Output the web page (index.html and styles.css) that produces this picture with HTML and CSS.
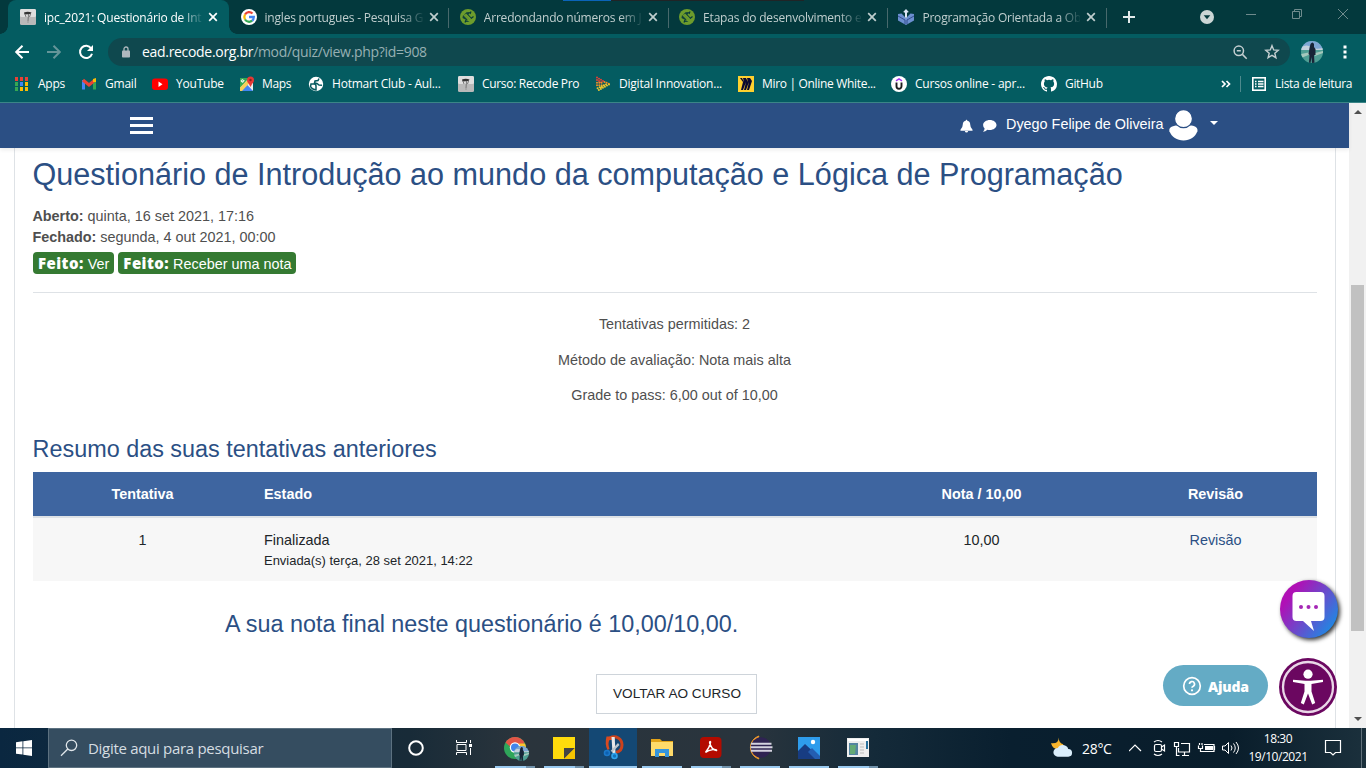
FILE: index.html
```html
<!DOCTYPE html>
<html lang="pt-br">
<head>
<meta charset="utf-8">
<title>ipc_2021: Questionário de Introdução</title>
<link rel="stylesheet" href="styles.css">
</head>
<body>
<svg class="defs" width="0" height="0" aria-hidden="true">
  <symbol id="close" viewBox="0 0 10 10"><path d="M1.2 1.2L8.8 8.8M8.8 1.2L1.2 8.8" stroke="currentColor" stroke-width="1.7" fill="none"/></symbol>
  <symbol id="recode" viewBox="0 0 16 16"><rect width="16" height="16" rx="1.5" fill="#b9b9b9"/><rect width="16" height="8" rx="1.5" fill="#dedede"/><path d="M4 3.5Q8 1.8 11.5 3.6L10.5 5L4.5 5.500Z" fill="#333"/><path d="M8.5 5L8 12M5 5L6 8M10.5 5L9.5 8M8 12.5v1" stroke="#777" fill="none"/></symbol>
  <symbol id="devmedia" viewBox="0 0 16 16"><circle cx="8" cy="8" r="8" fill="#6d9c2c"/><path d="M6.500 3.200L10.500 3 8.500 5.500 11.800 9 9.800 11 4.300 5.500zM9.500 12.800L5.500 13 7.500 10.500 3 6 2.500 9z" fill="#05393c" opacity=".9"/><path d="M4.500 6L6 4.500 11.500 10 10 11.500z" fill="#6d9c2c"/><path d="M11 2.500l-1 2.500M13.500 7.500l-2.500 2M5 13.500l1-2.500" stroke="#05393c" stroke-width="1.200"/></symbol>
  <symbol id="photo" viewBox="0 0 22 22"><clipPath id="pc"><circle cx="11" cy="11" r="11"/></clipPath><g clip-path="url(#pc)"><rect width="22" height="22" fill="#4f9e94"/><rect width="22" height="8" fill="#7da6d4"/><path d="M0 6Q6 3 10 6T22 7V9H0z" fill="#c3d1dd"/><path d="M0 13L10 11v2L0 17zM14 12l8-2v2l-8 3z" fill="#a5c8bd"/><path d="M9.500 3q2-3 3.500 0v3l1.500 2v6h-1.500l.5 8h-2.500l-.5-6-1 6H8l.5-8-1-1 1-6z" fill="#172437"/></g></symbol>
</svg>
<div class="browser">
  <div class="tabstrip">
    <i class="edge blue"></i><i class="edge dark"></i>
    <div class="tab active"><svg class="fav"><use href="#recode"/></svg><span class="ttl">ipc_2021: Questionário de Int</span><svg class="x"><use href="#close"/></svg></div>
    <div class="tab sep"><svg class="fav" viewBox="0 0 16 16"><circle cx="8" cy="8" r="8" fill="#fff"/><g fill="none" stroke-width="2.300"><path d="M4 5.500A4.900 4.900 0 0 1 11.500 4.500" stroke="#ea4335"/><path d="M4 5.500A5 5 0 0 0 4 10.500" stroke="#fbbc05"/><path d="M4 10.500A4.900 4.900 0 0 0 11.200 11.700" stroke="#34a853"/><path d="M8 8h4.800Q12.700 10.600 11.200 11.700" stroke="#4285f4"/></g></svg><span class="ttl">ingles portugues - Pesquisa G</span><svg class="x"><use href="#close"/></svg></div>
    <div class="tab sep"><svg class="fav"><use href="#devmedia"/></svg><span class="ttl">Arredondando números em Ja</span><svg class="x"><use href="#close"/></svg></div>
    <div class="tab sep"><svg class="fav"><use href="#devmedia"/></svg><span class="ttl">Etapas do desenvolvimento e</span><svg class="x"><use href="#close"/></svg></div>
    <div class="tab sep"><svg class="fav" viewBox="0 0 16 16"><path d="M0 5l3.500-.5L8 9l4.500-4.500L16 5v6.500L8 16l-8-4.500z" fill="#6b8fd0"/><path d="M0 7l7 4v4M16 7l-7 4v4" stroke="#344f91" fill="none"/><path d="M8 0l2.800 3-1.800.7V8L8 9.500 7 8V3.700L5.200 3z" fill="#dce6f5"/></svg><span class="ttl">Programação Orientada a Obj</span><svg class="x"><use href="#close"/></svg></div>
    <svg class="plus" viewBox="0 0 12 12"><path d="M6 0v12M0 6h12" stroke="#e2eaea" stroke-width="2"/></svg>
    <svg class="caps" viewBox="0 0 170 34"><circle cx="17" cy="17" r="7" fill="#ccd6d6"/><path d="M13.700 15.200h6.600L17 19.300z" fill="#053a3e"/><g fill="none" stroke="#6f8b8d"><path d="M56 14.500h10"/><path d="M102.500 11.500h7v7h-7zM104.500 11.500v-2h7v7h-2"/><path d="M148 9l10 10M158 9l-10 10"/></g></svg>
  </div>
  <div class="toolbar">
    <svg class="nav" viewBox="0 0 100 30"><g fill="none" stroke="#fff" stroke-width="2"><path d="M29 15H16.500M22.500 8.700L16.200 15l6.300 6.300"/><path d="M47 15h13M53.500 8.700L59.800 15l-6.300 6.300" stroke="#659599"/><path d="M91.200 11.500A6.100 6.100 0 1 0 92 16.700"/></g><path d="M93 8v6h-6z" fill="#fff"/></svg>
    <div class="address"><svg class="lock" viewBox="0 0 8 12"><path d="M2 5V3a2 2 0 0 1 4 0v2" fill="none" stroke="#aeb8be" stroke-width="1.300"/><rect y="4.500" width="8" height="7" rx=".8" fill="#aeb8be"/></svg><span class="url"><b>ead.recode.org.br</b>/mod/quiz/view.php?id=908</span>
    <svg class="addricons" viewBox="0 0 60 28"><g fill="none" stroke="#c5cfd1" stroke-width="1.500"><circle cx="14.800" cy="12.800" r="4.700"/><path d="M18.400 16.400l4.300 4.300M12.800 12.800h4"/><path d="M48 7.700l1.700 4.200 4.500.4-3.400 2.900 1.100 4.500L48 17.300l-3.900 2.400 1.100-4.500-3.400-2.900 4.500-.4z" stroke-width="1.400"/></g></svg></div>
    <svg class="photo"><use href="#photo"/></svg>
    <svg class="dots" viewBox="0 0 4 14"><path d="M.5.5h3v3h-3zM.5 5.500h3v3h-3zM.5 10.500h3v3h-3z" fill="#fff"/></svg>
  </div>
  <div class="bookmarks">
    <div><svg viewBox="0 0 16 16"><path d="M1 1h3v4H1zM6 1h3v4H6zM11 1h3v4h-3z" fill="#e84236"/><path d="M1 6h3v4H1z" fill="#36a853"/><path d="M6 6h3v4H6z" fill="#4285f4"/><path d="M11 6h3v4h-3z" fill="#fbbc05"/><path d="M1 11h3v4H1z" fill="#36a853"/><path d="M6 11h3v4H6zM11 11h3v4h-3z" fill="#fbbc05"/></svg><span>Apps</span></div>
    <div><svg viewBox="0 0 16 16"><path d="M2.500 13.500V4" stroke="#4285f4" stroke-width="3"/><path d="M13.500 13.500V4" stroke="#34a853" stroke-width="3"/><path d="M2 4l6 5 6-5" stroke="#ea4335" stroke-width="3" fill="none"/><path d="M12 6V3l3-1v4z" fill="#fbbc05"/></svg><span>Gmail</span></div>
    <div><svg viewBox="0 0 16 16"><rect y="2.500" width="16" height="11.500" rx="3" fill="#f00"/><path d="M6.500 5.500l4 2.700-4 2.700z" fill="#fff"/></svg><span>YouTube</span></div>
    <div><svg viewBox="0 0 16 16"><rect x="2" y="2" width="13" height="13" rx="1" fill="#eee"/><path d="M2 2h9L2 12z" fill="#34a853"/><path d="M3 15l6-6.500L15 15z" fill="#4285f4"/><path d="M2 11.500L10.500 3l2 3L4 15H2z" fill="#f6cf58"/><circle cx="12.500" cy="4" r="3.500" fill="#e53935"/><path d="M9.800 6l2.700 5L15.200 6z" fill="#e53935"/><circle cx="12.500" cy="4" r="1.200" fill="#8b201c"/><path d="M6.500 4.700H4.700v1h.8A1.300 1.300 0 1 1 5.400 4" stroke="#fff" fill="none"/></svg><span>Maps</span></div>
    <div><svg viewBox="0 0 16 16"><circle cx="8" cy="8" r="7.200" fill="#fff"/><path d="M3 8h3q2 0 2 2v4q-4-.5-5.500-3.500zM11 2.500L10 4.500 7 5l-.5 2L9 7.500l2 1.500 3 .3" fill="none" stroke="#075b60" stroke-width="1.500"/></svg><span>Hotmart Club - Aul...</span></div>
    <div><svg><use href="#recode"/></svg><span>Curso: Recode Pro</span></div>
    <div><svg viewBox="0 0 16 16"><g fill="none" stroke-width="2" stroke-linecap="round" stroke-dasharray="0 2.300"><path d="M2 1.500L9 5.500M2 4l5 2.700" stroke="#e83f36"/><path d="M2 6.800h6M9.500 6l5 2M2 9.200h8" stroke="#ef8d28"/><path d="M14 8.500L2 15M11 8.500L2 12.500M6 11.500h1" stroke="#e8c62d"/></g></svg><span>Digital Innovation...</span></div>
    <div><svg viewBox="0 0 16 16"><rect width="16" height="16" fill="#ffd02f"/><path d="M2 2h2l2 4-1-4h3l2 4-1-4h3l2 3-3 9h-2l2-8-3 8H6l2-8-3 8H3l2-8z" fill="#0b0931"/></svg><span>Miro | Online White...</span></div>
    <div><svg viewBox="0 0 16 16"><circle cx="8" cy="8" r="8" fill="#fff"/><path d="M5.500 6.500v3.800a2.500 2.500 0 0 0 5 0V6.500" fill="none" stroke="#1c1d1f" stroke-width="1.900"/><path d="M5 4.800l3-2 3 2" fill="none" stroke="#a435f0" stroke-width="1.400"/></svg><span>Cursos online - apr...</span></div>
    <div><svg viewBox="0 0 16 16"><path fill="#fff" d="M8 0C3.580 0 0 3.580 0 8c0 3.540 2.290 6.530 5.470 7.590.4.070.55-.17.55-.38 0-.19-.01-.82-.01-1.490-2.010.37-2.530-.49-2.690-.94-.09-.23-.48-.94-.82-1.130-.28-.15-.68-.52-.01-.53.63-.01 1.080.58 1.230.82.72 1.210 1.870.87 2.330.66.07-.52.28-.87.51-1.070-1.780-.2-3.640-.89-3.640-3.950 0-.87.31-1.590.82-2.150-.08-.2-.36-1.020.08-2.120 0 0 .67-.21 2.200.82a7.600 7.600 0 0 1 4 0c1.530-1.040 2.200-.82 2.200-.82.44 1.100.16 1.920.08 2.120.51.56.82 1.270.82 2.150 0 3.070-1.870 3.750-3.650 3.950.29.25.54.73.54 1.480 0 1.070-.01 1.930-.01 2.200 0 .21.15.46.55.38A8 8 0 0 0 16 8c0-4.420-3.580-8-8-8z"/></svg><span>GitHub</span></div>
    <svg class="more" viewBox="0 0 10 10"><path d="M1 2l3 3-3 3M5.500 2l3 3-3 3" fill="none" stroke="#fff" stroke-width="1.700"/></svg>
    <div class="reading"><svg viewBox="0 0 16 16"><rect x="1.800" y="1.800" width="12.400" height="12.400" fill="none" stroke="#fff" stroke-width="1.600"/><path d="M4 5.500h1.500M7 5.500h5.500M4 8h1.500M7 8h5.500M4 10.500h1.500M7 10.500h5.500" stroke="#fff" stroke-width="1.300"/></svg><span>Lista de leitura</span></div>
  </div>
</div>
<div class="viewport">
  <div class="site">
    <header class="sitebar">
      <div class="burger"><i></i><i></i><i></i></div>
      <div class="user">
        <svg class="bell" viewBox="0 0 14 14"><path d="M7 0l1 1.300q3 .8 3 4.200 0 3.500 2.500 5.500v1H.5v-1Q3 9 3 5.500q0-3.400 3-4.200zM5.200 12.300h3.600Q8.500 14 7 14t-1.800-1.700z" fill="#fff"/></svg>
        <svg class="talk" viewBox="0 0 14 12"><path d="M7.300 0C11 0 14 2.200 14 5s-3 5-6.700 5q-1.300 0-2.400-.3Q3 11.700.4 11.700q1.600-1.400 1.700-3.200Q.6 7 .6 5C.6 2.200 3.600 0 7.300 0z" fill="#fff"/></svg>
        <span>Dyego Felipe de Oliveira</span>
        <svg class="avatar" viewBox="0 0 30 32"><path d="M7 16C1 17 0 19 .4 22 3 28 8 31.500 15 31.500S27 28 29.400 22C30 19 28 16.500 23 16z" fill="#fff"/><circle cx="15" cy="9" r="9.300" fill="#fff" stroke="#2b4f84" stroke-width="1.300"/></svg>
        <i class="caret"></i>
      </div>
    </header>
    <main class="card">
      <h1>Questionário de Introdução ao mundo da computação e Lógica de Programação</h1>
      <div class="dates"><div><b>Aberto:</b> quinta, 16 set 2021, 17:16</div><div><b>Fechado:</b> segunda, 4 out 2021, 00:00</div></div>
      <div class="badges"><span><b>Feito:</b> Ver</span><span><b>Feito:</b> Receber uma nota</span></div>
      <div class="info"><p>Tentativas permitidas: 2</p><p>Método de avaliação: Nota mais alta</p><p>Grade to pass: 6,00 out of 10,00</p></div>
      <h2>Resumo das suas tentativas anteriores</h2>
      <div class="row head"><span>Tentativa</span><span class="left">Estado</span><span>Nota / 10,00</span><span>Revisão</span></div>
      <div class="row data"><span>1</span><span class="left">Finalizada<small>Enviada(s) terça, 28 set 2021, 14:22</small></span><span>10,00</span><span class="link">Revisão</span></div>
      <h2 class="final">A sua nota final neste questionário é 10,00/10,00.</h2>
      <button class="back">VOLTAR AO CURSO</button>
    </main>
  </div>
  <div class="scroll"><i class="up"></i><i class="thumb"></i><i class="down"></i></div>
  <svg class="chat" viewBox="0 0 66 66"><defs><linearGradient id="g" x1="0.05" y1=".2" x2=".95" y2=".85"><stop offset=".12" stop-color="#b010b5"/><stop offset="1" stop-color="#198ee5"/></linearGradient></defs><circle cx="31" cy="31" r="29" fill="url(#g)"/><path d="M18.500 14h24q4 0 4 4v21q0 4-4 4H33l3 10L25 43h-6.500q-4 0-4-4V18q0-4 4-4z" fill="#fff"/><g fill="#a527b5"><circle cx="23" cy="29" r="2"/><circle cx="30.500" cy="29" r="2"/><circle cx="38" cy="29" r="2"/></g></svg>
  <div class="help"><svg viewBox="0 0 20 20"><circle cx="10" cy="10" r="8.300" fill="none" stroke="#fff" stroke-width="1.700"/><path d="M7.500 8a2.500 2.500 0 1 1 3.700 2.200q-1.200.6-1.200 1.600" fill="none" stroke="#fff" stroke-width="1.700"/><circle cx="10" cy="14.300" r="1.100" fill="#fff"/></svg><b>Ajuda</b></div>
  <svg class="access" viewBox="0 0 58 58"><circle cx="29" cy="29" r="29" fill="#6b0760"/><circle cx="29" cy="29" r="25" fill="none" stroke="#ead7e8" stroke-width="2.300"/><circle cx="29" cy="16.200" r="4.600" fill="#fff"/><path d="M14 21.800l12.500 1h5l12.500-1v2.200l-11.500 2v7.500L36.200 45l-3 1.500L29 35.500l-4.200 11-3-1.500 3.700-11.500V26L14 24z" fill="#fff"/></svg>
</div>
<div class="taskbar">
  <div class="start"><svg viewBox="0 0 16 16"><path d="M0 2.300l6.500-1v6.200H0zM7.300 1.200L16 0v7.500H7.300zM0 8.300h6.500v6.300L0 13.700zM7.300 8.300H16V16l-8.700-1.200z" fill="#fff"/></svg></div>
  <div class="search"><svg viewBox="0 0 18 18"><circle cx="11.500" cy="6.300" r="5.200" fill="none" stroke="#e0e6ea" stroke-width="1.300"/><path d="M7.800 10L1 16.800" stroke="#e0e6ea" stroke-width="1.300"/></svg><span>Digite aqui para pesquisar</span></div>
  <div class="slot"><svg viewBox="0 0 24 24"><circle cx="12" cy="12" r="6.800" fill="none" stroke="#fff" stroke-width="2"/></svg></div>
  <div class="slot"><svg viewBox="0 0 24 24"><path d="M4.500 4v2.500h10V4M4.500 19v-2.500h10V19M5 8.500h9v6H5zM18.500 4v3M18.500 12v7" fill="none" stroke="#fff"/><path d="M17 8h3v3h-3z" fill="#fff"/></svg></div>
  <div class="apps">
    <div class="app stack"><svg viewBox="0 0 26 26"><circle cx="13" cy="13" r="11" fill="#2fa65a"/><path d="M3.500 7.500a11 11 0 0 1 19 0l-4 4H8z" fill="#e25547"/><path d="M23 8.500a11 11 0 0 1-8 15.300l-2-7 4-8.300z" fill="#fbc42f"/><circle cx="13" cy="12.500" r="5.200" fill="#fff"/><circle cx="13" cy="12.500" r="4" fill="#4385ec"/><use href="#photo" x="12" y="11" width="15" height="15"/></svg></div>
    <div class="app stack"><svg viewBox="0 0 26 26"><path d="M2 2h22v22H2z" fill="#ffdb0c"/><path d="M13 13h11L13 24z" fill="#444"/><path d="M24 13v11H13z" fill="#f6c400"/></svg></div>
    <div class="app on"><svg viewBox="0 0 26 26"><path d="M10 2.800c6-3 12 1 12 7 0 4-2 7-6 7.500" fill="none" stroke="#cc421d" stroke-width="3"/><path d="M6.500 1.500h8v3.500h-5q-2 3 0 9l-2 1q-3-6-1-13.500z" fill="#d94a20"/><path d="M11.500 2h3.200l.8 16h-3z" fill="#e8e8e8"/><path d="M18 8l1.500 2-7 7-2-1z" fill="#bcc5cc"/><circle cx="7" cy="18" r="2.500" fill="#0d60b0" stroke="#1b79ca" stroke-width="1.600"/><circle cx="14.500" cy="21" r="2.500" fill="#1275bd" stroke="#31a4ec" stroke-width="1.600"/></svg></div>
    <div class="app"><svg viewBox="0 0 26 26"><path d="M2 4h9l2 2h11v15H2z" fill="#e3a318"/><path d="M2 7h22v14H2z" fill="#ffda6a"/><path d="M6 14h14v8h-4v-4h-6v4H6z" fill="#3695dc"/></svg></div>
    <div class="app stack"><svg viewBox="0 0 26 26"><rect x="2" y="2" width="21.500" height="21" rx="4" fill="#b30b00"/><path d="M7.500 17.500c2-2.500 4.500-7 5-10 .2-1.500-1.200-1-.8.5 1 4 4 7 6.800 7.500 1-1.500-7-1.500-11 2z" fill="none" stroke="#fff" stroke-width="1.500"/></svg></div>
    <div class="app"><svg viewBox="0 0 26 26"><path d="M12 1a12 12 0 0 0 0 23q-9-11.500 0-23z" fill="#f39c2c" stroke="#f39c2c"/><circle cx="14" cy="12.500" r="10.200" fill="#2f2352"/><path d="M4 8.800h20.500M3.500 12.300h22M4 15.800h21" stroke="#d5d3e0" stroke-width="1.900"/></svg></div>
    <div class="app"><svg viewBox="0 0 26 26"><path d="M2 2h22v22H2z" fill="#2e9cec"/><path d="M2 16l7-7 15 14v1H2z" fill="#173c82"/><path d="M12 17l4-4 8 8v3h-5z" fill="#245eb1"/><circle cx="17" cy="7" r="2.200" fill="#fff"/></svg></div>
    <div class="app stack"><svg viewBox="0 0 26 26"><path d="M2 3h22v19H2z" fill="#eee"/><path d="M3 4h20v2H3z" fill="#fff"/><path d="M4 8h9v12H4z" fill="#5585a0"/><path d="M5 10h6l-1 9H5z" fill="#64aa75"/><path d="M15 9h4M15 12h4M15 15h4M15 18h4" stroke="#bbb"/><path d="M22 6v8" stroke="#26709e" stroke-width="2"/></svg></div>
  </div>
  <div class="tray">
    <svg class="weather" viewBox="0 0 24 22"><path d="M8 0q0 7-8 6 2 7 9 6l4-5Q8 6 8 0z" fill="#f8b52d"/><path d="M7 20a4.500 4.500 0 0 1 0-9 6 6 0 0 1 11 1 4 4 0 0 1 0 8z" fill="#d9edfb"/></svg>
    <span class="temp">28°C</span>
    <svg class="trayicons" viewBox="0 0 120 24"><g fill="none" stroke="#fff" stroke-width="1.200"><path d="M0 15l6-6 6 6"/><rect x="25.500" y="8.500" width="7" height="7" rx="1.500"/><path d="M32.500 11l3-2v6l-3-2M25 6q4-3 8 0M25 18q4 3 8 0"/><path d="M52 7.500h8.500v8.500H49.500V12M53 19.500h7M55.500 16v3.500M45.500 6.500h4v4h-4zM47.500 10.500v9h3"/><path d="M75 8.500h10v7H73M85.500 10v4M69.500 9.500v3h4v-3M70.500 7v2M73 7v2M71.500 12.500v3h2"/><path d="M93.500 10v4h2.500l3.500 3.500v-11L96 10zM102 9.500q2 2.500 0 5M104.500 7.500q3.500 4.500 0 9M107 6q5 6 0 12" stroke-width="1"/></g><path d="M76 10h8v4h-8z" fill="#fff"/></svg>
    <div class="clock"><div>18:30</div><div>19/10/2021</div></div>
    <svg class="notice" viewBox="0 0 18 18"><path d="M1.500 1.500h15v12h-5L9 16l-2.500-2.500h-5z" fill="none" stroke="#fff" stroke-width="1.200"/></svg>
    <i class="desk"></i>
  </div>
</div>
</body>
</html>
```
FILE: styles.css
```css
* { box-sizing: border-box; }
body { margin: 0; width: 1366px; height: 768px; overflow: hidden; display: flex; flex-direction: column; font-family: "Liberation Sans", Arial, sans-serif; background: #fff; }
svg { display: block; flex: none; }
.defs { position: absolute; }
.browser { height: 103px; flex: none; background: #045c61; border-bottom: 1px solid #3b8587; font-family: "Open Sans", sans-serif; font-size: 12px; color: #fff; }
.tabstrip { height: 34px; display: flex; background: #03393d; padding-left: 8px; position: relative; }
.edge { position: absolute; top: 0; height: 1px; }
.blue { left: 563px; width: 48px; background: #0a64b9; }
.dark { left: 611px; width: 193px; background: #202426; }
.tab { flex: none; width: 219.3px; height: 34px; display: flex; align-items: center; padding-left: 10.5px; color: #c0cece; position: relative; }
.tab.active { background: #045c61; border-radius: 8px 8px 0 0; width: 221px; padding-left: 12px; margin-right: 1px; color: #fff; z-index: 1; }
.tab.active::after, .tab.active::before { content: ""; position: absolute; bottom: 0; width: 8px; height: 8px; }
.tab.active::after { right: -8px; background: radial-gradient(circle at 100% 0, transparent 7.5px, #045c61 8px); }
.tab.active::before { left: -8px; background: radial-gradient(circle at 0 0, transparent 7.5px, #045c61 8px); }
.tab.sep { background: linear-gradient(#48696c, #48696c) 100% 60% / 1px 20px no-repeat; }
.fav { width: 16px; height: 16px; }
.ttl { width: 158px; margin-left: 8px; white-space: nowrap; letter-spacing: -.2px; mask-image: linear-gradient(90deg, #000 136px, transparent 160px); }
.x { width: 10px; height: 10px; margin-left: 6px; }
.plus { width: 12px; height: 12px; margin: 11px 0 0 15.5px; }
.caps { width: 170px; height: 34px; margin-left: 55px; }
.toolbar { height: 32px; display: flex; align-items: center; padding-top: 4px; }
.nav { width: 100px; height: 30px; }
.address { margin-left: 8px; width: 1182px; height: 28px; border-radius: 14px; background: #0f484e; display: flex; align-items: center; padding-left: 14px; }
.lock { width: 8px; height: 12px; }
.url { margin: -1px 0 0 12px; font-size: 14px; color: #97b0b3; letter-spacing: -.31px; white-space: nowrap; }
.url b { font-weight: 400; color: #fff; }
.addricons { width: 60px; height: 28px; margin-left: auto; margin-right: 6px; }
.photo { width: 22px; height: 22px; margin-left: 11px; }
.dots { width: 4px; height: 14px; margin-left: 20px; }
.bookmarks { height: 35px; display: grid; grid-template-columns: 67px 71px 86px 70px 150px 137px 143px 153px 150px 180px 19px 116px; padding-left: 14px; align-items: center; letter-spacing: -.32px; }
.bookmarks div { display: flex; gap: 8px; align-items: center; white-space: nowrap; }
.bookmarks div:nth-child(-n+3), .bookmarks div:nth-child(5), .bookmarks div:nth-child(7), .bookmarks div:nth-child(9) { letter-spacing: -.22px; }
.bookmarks div svg { width: 16px; height: 16px; }
.more { width: 10px; height: 10px; }
.bookmarks .reading { border-left: 1px solid #4d8a8d; height: 16px; padding-left: 10px; }
.viewport { height: 625px; position: relative; display: flex; overflow: hidden; }
.site { width: 1349px; }
.sitebar { height: 45px; background: #2b4f84; display: flex; justify-content: space-between; padding-left: 130px; box-shadow: 0 2px 4px rgba(0,0,0,.08); position: relative; }
.burger { width: 23px; padding-top: 14px; display: flex; flex-direction: column; gap: 4px; }
.burger i { height: 3px; background: #fff; }
.user { display: flex; align-items: center; color: #fff; font-size: 14.4px; width: 389px; height: 44px; white-space: nowrap; }
.user span { margin-top: -2px; }
.bell { width: 13px; height: 14px; margin-top: 1px; }
.talk { width: 15px; height: 12px; margin: 2px 9px 0 9px; }
.avatar { width: 29px; height: 31px; margin: 1px 0 0 5px; }
.caret { border: 4px solid transparent; border-top-color: #fff; border-bottom: 0; margin: -4px 0 0 12px; }
.card { width: 1322px; height: 580px; margin-left: 14px; border: solid #dee2e6; border-width: 0 1px; padding: 7px 18px 0; font-size: 14.4px; color: #4f4f4f; }
h1, h2, p { margin: 0; font-weight: 400; }
h1 { font-size: 30.6px; line-height: 39px; color: #2b4f84; white-space: nowrap; margin-left: -.5px; }
.dates { margin: 12px 0 0 -.6px; line-height: 21px; }
.badges { display: flex; gap: 4px; margin-top: 4px; height: 41px; border-bottom: 1px solid #dee2e6; }
.badges span { background: #357a32; color: #fff; height: 22px; line-height: 22px; padding: 0 5px; border-radius: 4px; white-space: nowrap; }
.badges b { font-family: "Open Sans", sans-serif; font-weight: 800; font-size: 15px; letter-spacing: .45px; }
.info { margin: 21px 1px 0 0; text-align: center; line-height: 21px; display: flex; flex-direction: column; gap: 14.5px; }
h2 { font-size: 23.38px; line-height: 29px; color: #2b4f84; white-space: nowrap; margin: 29px 0 0 -.4px; }
.row { display: grid; grid-template-columns: 219px 597px 265px 203px; text-align: center; width: 1284px; }
.left { text-align: left; padding-left: 12px; }
.head { margin-top: 8px; height: 46px; line-height: 44px; background: #3e65a0; color: #fff; font-weight: 700; border-bottom: 2px solid #dee2e6; }
.data { height: 63px; background: #f7f7f7; color: #212529; padding-top: 12px; line-height: 21px; }
.data small { display: block; font-size: 12.96px; line-height: 20px; }
.data .link { color: #2b4f84; }
.final { margin: 29px 0 0 192px; }
.back { display: block; width: 161px; height: 40px; margin: 35px 0 0 563px; border: 1px solid #ced4da; background: #fff; font: 13.6px "Liberation Sans", Arial, sans-serif; color: #212529; padding: 0 0 2px 1px; }
.scroll { width: 17px; background: #f1f1f1; display: flex; flex-direction: column; align-items: center; }
.up, .down { border: 4px solid transparent; }
.up { border-bottom-color: #505050; border-top: 0; margin-top: 7px; }
.down { border-top-color: #505050; border-bottom: 0; margin-top: 86px; }
.thumb { width: 13px; height: 346px; background: #c1c1c1; margin-top: 171px; }
.chat { position: absolute; left: 1278px; top: 475px; width: 66px; height: 66px; filter: drop-shadow(2px 2px 2px #333); }
.help { position: absolute; left: 1163px; top: 562px; width: 105px; height: 41px; border-radius: 21px; background: #64abc5; color: #fff; display: flex; align-items: center; padding-left: 19px; gap: 6px; padding-top: 1px; font: 800 14px "Open Sans", sans-serif; letter-spacing: -.2px; }
.help svg { width: 20px; height: 20px; }
.help b { padding-top: 1px; }
.access { position: absolute; left: 1279px; top: 555px; width: 58px; height: 58px; }
.taskbar { height: 40px; display: flex; background: linear-gradient(90deg, #0a2740, #122b3d 12%, #182b38 30%, #2a343c 38%, #29343d 55%, #142a39 64%, #091f2f 74%, #091d2b 90%, #1b303c); font-family: "Open Sans", sans-serif; color: #fff; }
.start { width: 48px; padding: 12px 16px; }
.start svg { width: 16px; height: 16px; }
.search { width: 344px; background: #354d60; border: 1px solid #5c7180; display: flex; align-items: center; padding-left: 11px; gap: 10px; color: #d5dde2; font-size: 15px; letter-spacing: -.3px; white-space: nowrap; }
.search svg { width: 18px; height: 18px; }
.slot { width: 48px; padding: 8px 12px; }
.slot svg { width: 24px; height: 24px; }
.apps { display: flex; gap: 1px; margin-left: 3px; }
.app { width: 48px; height: 40px; padding: 7px 11px 0; background: linear-gradient(#99c9ef, #99c9ef) 50% 100% / 40px 2px no-repeat; }
.app svg { width: 26px; height: 26px; overflow: visible; }
.app.stack { background: linear-gradient(90deg, #99c9ef 31px, #7192ab 31px) 50% 100% / 40px 2px no-repeat; }
.apps .on { background: linear-gradient(#99c9ef, #99c9ef) 50% 100% / 48px 2px no-repeat, #144874; }
.tray { margin-left: auto; width: 315px; display: flex; align-items: center; }
.weather { width: 23px; height: 22px; }
.temp { font-size: 14px; margin-left: 8px; letter-spacing: -.3px; width: 47px; white-space: nowrap; }
.trayicons { width: 120px; height: 24px; }
.clock { width: 70px; margin-left: -6px; font-size: 12px; line-height: 18px; letter-spacing: -.45px; text-align: center; padding-bottom: 1px; }
.notice { width: 18px; height: 18px; margin-left: 11px; }
.desk { width: 1px; height: 40px; background: #61717b; margin-left: 19px; }
```
